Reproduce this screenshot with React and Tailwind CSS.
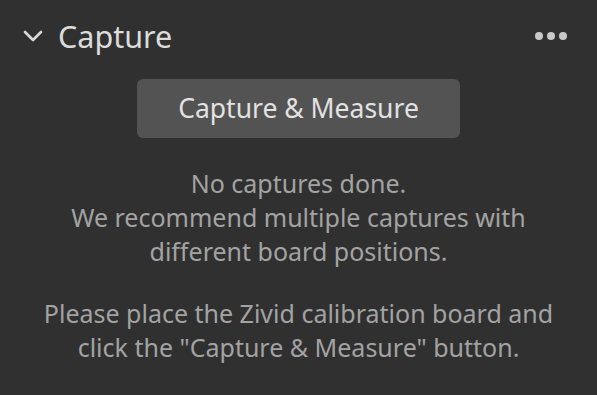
import React from 'react';

function Chevron() {
  return (
    <svg width="20" height="12" viewBox="0 0 20 12" className="text-[#d8d8d8]">
      <path d="M2 2 L10 10 L18 2" fill="none" stroke="currentColor" strokeWidth="2.6" strokeLinecap="round" strokeLinejoin="round" />
    </svg>
  );
}

export default function App() {
  return (
    <div className="w-[597px] h-[395px] bg-[#303030] overflow-hidden" style={{ fontFamily: '"Noto Sans", "Open Sans", sans-serif' }}>
      <div className="flex items-center h-[72px] pl-[23px] pr-[30px]">
        <Chevron />
        <span className="ml-[15px] text-[30.5px] text-[#dcdcdc] leading-none">Capture</span>
        <div className="ml-auto flex gap-[4px]">
          <span className="w-[8px] h-[8px] rounded-full bg-[#c8c8c8]" />
          <span className="w-[8px] h-[8px] rounded-full bg-[#c8c8c8]" />
          <span className="w-[8px] h-[8px] rounded-full bg-[#c8c8c8]" />
        </div>
      </div>
      <div className="flex justify-center mt-[7px]">
        <button className="w-[323px] h-[59px] rounded-[6px] bg-[#535353] text-[#e2e2e2] text-[26.5px]">Capture &amp; Measure</button>
      </div>
      <div className="mt-[28px] text-center text-[#a3a3a3] text-[25px] leading-[34px]">
        <p>No captures done.</p>
        <p>We recommend multiple captures with</p>
        <p>different board positions.</p>
        <p className="mt-[28px]">Please place the Zivid calibration board and</p>
        <p>click the "Capture &amp; Measure" button.</p>
      </div>
    </div>
  );
}
